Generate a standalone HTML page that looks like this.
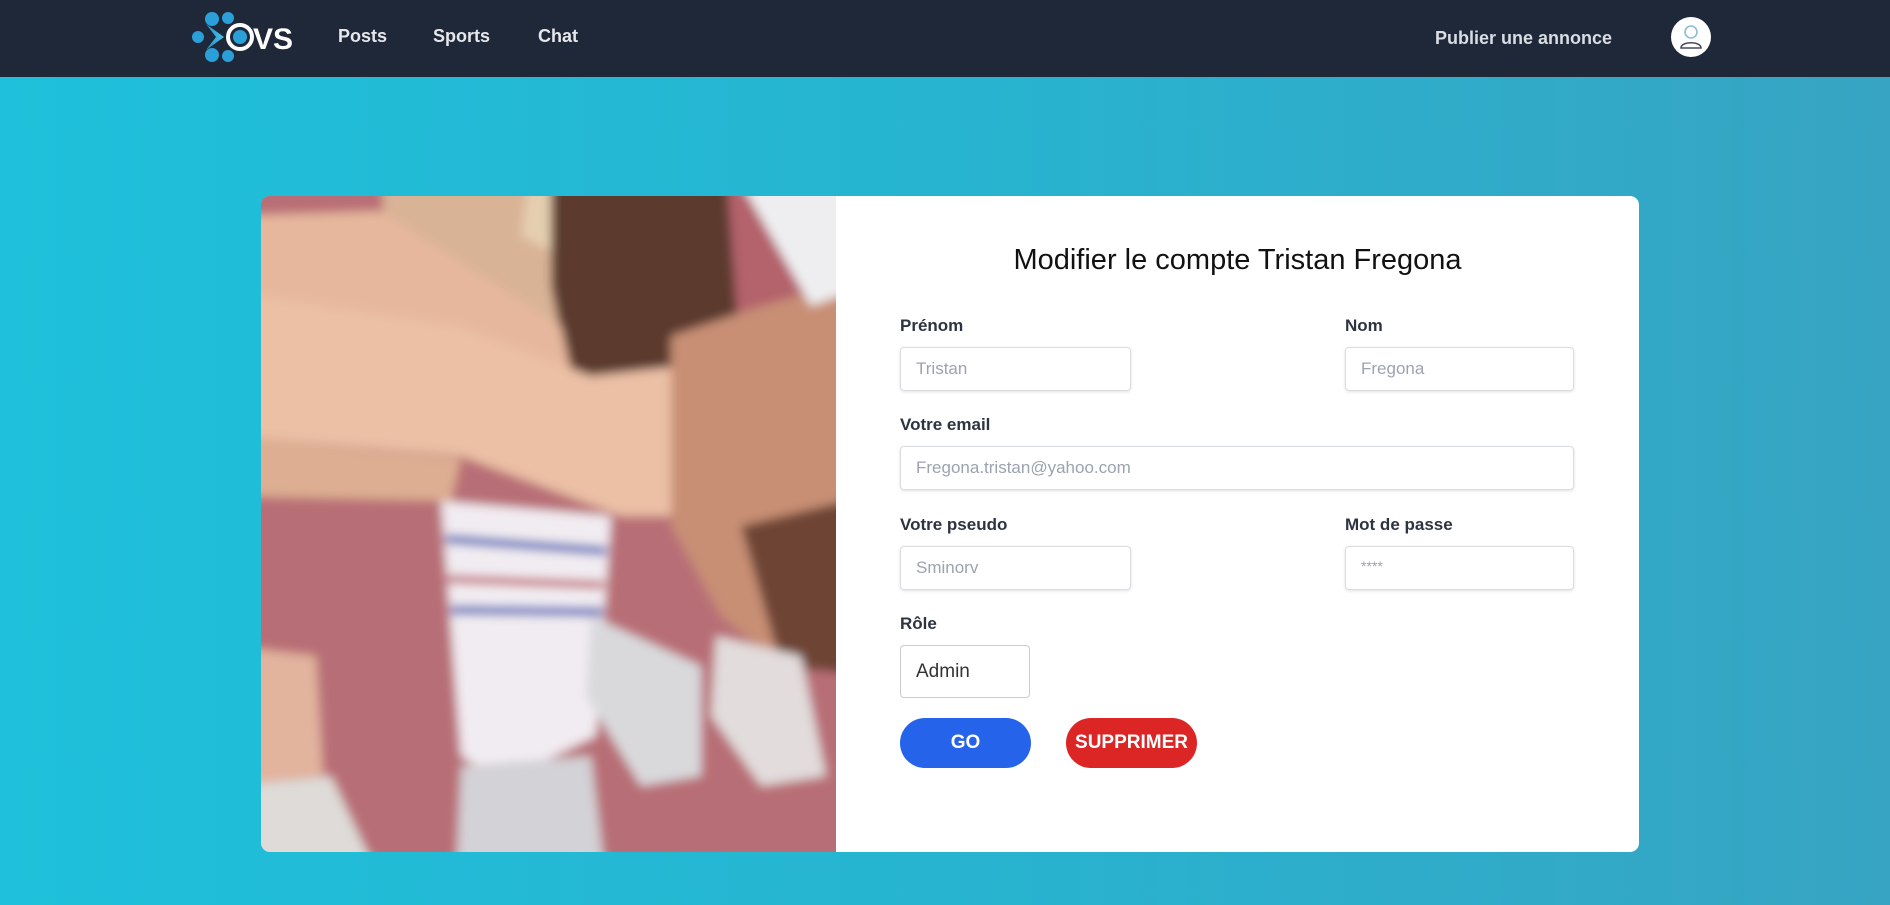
<!DOCTYPE html>
<html><head><meta charset="utf-8"><style>
*{box-sizing:border-box;margin:0;padding:0}
body{width:1890px;height:905px;overflow:hidden;font-family:"Liberation Sans",sans-serif;background:linear-gradient(90deg,#1ec0db 0%,#27b4d0 50%,#37a4c3 100%);position:relative}
.hdr{position:absolute;left:0;top:0;width:1890px;height:77px;background:#1f2839}
.nav{position:absolute;top:26px;color:#e5e7eb;font-weight:bold;font-size:18px}
.card{position:absolute;left:261px;top:196px;width:1378px;height:656px;background:#fff;border-radius:9px;overflow:hidden}
.lbl{position:absolute;font-weight:bold;font-size:17px;color:#2d3340}
.inp{position:absolute;height:44px;border:1px solid #d9dce1;border-radius:4px;box-shadow:0 1px 3px rgba(0,0,0,.12);color:#9ca3af;font-size:17px;padding-left:15px;line-height:42px}
.btn{position:absolute;top:718px;height:50px;border-radius:25px;color:#fff;font-weight:bold;font-size:19px;text-align:center;line-height:50px}
</style></head><body>
<div class="hdr">
<svg style="position:absolute;left:190px;top:10px" width="106" height="54" viewBox="0 0 106 54">
<defs><linearGradient id="g" x1="0" x2="1"><stop offset="0" stop-color="#1d8fd0"/><stop offset="1" stop-color="#4cc4e4"/></linearGradient></defs>
<circle cx="8" cy="27" r="6" fill="#2a9fd8"/>
<circle cx="22" cy="9" r="7" fill="#2a9fd8"/>
<circle cx="22" cy="45" r="7" fill="#2a9fd8"/>
<circle cx="38" cy="8" r="6" fill="#2a9fd8"/>
<circle cx="38" cy="46" r="6" fill="#2a9fd8"/>
<path d="M16 14 L34 27 L16 40 L26 27 Z" fill="url(#g)"/>
<circle cx="50" cy="27" r="12" fill="none" stroke="#fff" stroke-width="4"/>
<circle cx="50" cy="27" r="7" fill="#2a9fd8"/>
<text x="63" y="39" fill="#fff" font-family="Liberation Sans" font-weight="bold" font-size="30">VS</text>
</svg>
<div class="nav" style="left:338px">Posts</div>
<div class="nav" style="left:433px">Sports</div>
<div class="nav" style="left:538px">Chat</div>
<div class="nav" style="left:1435px;top:28px;color:#d8dde4">Publier une annonce</div>
<svg style="position:absolute;left:1671px;top:17px" width="40" height="40" viewBox="0 0 40 40">
<circle cx="20" cy="20" r="20" fill="#fff"/>
<circle cx="20" cy="15" r="6" fill="none" stroke="#8bbfd0" stroke-width="1.6"/>
<path d="M10 31 C10 24 30 24 30 31 Z" fill="none" stroke="#4a4a5a" stroke-width="1.6"/>
</svg>
</div>
<div class="card">
<div style="position:absolute;left:0;top:0;width:575px;height:656px;overflow:hidden;background:#b86e76">
<svg style="position:absolute;left:-30px;top:-30px" width="635" height="716" viewBox="-30 -30 635 716">
<defs><filter id="b" filterUnits="userSpaceOnUse" x="-30" y="-30" width="635" height="716"><feGaussianBlur stdDeviation="5"/></filter></defs>
<g filter="url(#b)">
<rect x="-30" y="-30" width="635" height="716" fill="#b86e76"/>
<rect x="440" y="-30" width="165" height="290" fill="#b4626c"/>
<path d="M120 -30 L290 -30 L300 170 L260 230 L130 180 Z" fill="#d9b396"/>
<path d="M270 -30 L300 -30 L300 60 L260 40 Z" fill="#e5cfb0"/>
<path d="M290 -30 L465 -30 L480 170 L420 200 L310 190 L290 90 Z" fill="#5b3a2e"/>
<path d="M-30 20 L120 15 L300 130 L310 175 L-30 120 Z" fill="#e6b79c"/>
<path d="M-30 95 L200 130 L330 180 L420 170 L470 220 L440 320 L360 320 L200 260 L-30 240 Z" fill="#ebc0a5"/>
<path d="M-30 240 L200 262 L190 305 L-30 300 Z" fill="#ddae92"/>
<path d="M410 140 L500 110 L605 80 L605 400 L520 470 L460 420 L410 330 Z" fill="#c88f75"/>
<path d="M470 -30 L605 -30 L605 90 L550 110 Z" fill="#eeeef0"/>
<path d="M480 330 L605 300 L605 480 L520 470 Z" fill="#6e4535"/>
<path d="M180 305 L350 320 L335 540 L240 585 L200 560 Z" fill="#f1ecf1"/>
<path d="M185 343 L345 355" stroke="#3e56b5" stroke-width="8"/>
<path d="M187 383 L343 389" stroke="#bb4b5a" stroke-width="7"/>
<path d="M190 414 L342 416" stroke="#3e56b5" stroke-width="8"/>
<path d="M330 420 L440 470 L440 580 L380 590 L325 500 Z" fill="#d9d9dc"/>
<path d="M200 570 L330 560 L345 686 L195 686 Z" fill="#d3d2d6"/>
<path d="M455 440 L540 460 L565 580 L500 590 L450 520 Z" fill="#e2dcdc"/>
<path d="M-30 450 L55 460 L62 580 L-30 590 Z" fill="#e2b49e"/>
<path d="M-30 590 L70 580 L120 686 L-30 686 Z" fill="#dedbd8"/>
</g>
</svg>
</div>
<div style="position:absolute;left:575px;width:803px;top:48px;text-align:center;font-size:29px;color:#111">Modifier le compte Tristan Fregona</div>
</div>
<div class="lbl" style="left:900px;top:316px">Prénom</div>
<div class="lbl" style="left:1345px;top:316px">Nom</div>
<div class="inp" style="left:900px;top:347px;width:231px">Tristan</div>
<div class="inp" style="left:1345px;top:347px;width:229px">Fregona</div>
<div class="lbl" style="left:900px;top:415px">Votre email</div>
<div class="inp" style="left:900px;top:446px;width:674px">Fregona.tristan@yahoo.com</div>
<div class="lbl" style="left:900px;top:515px">Votre pseudo</div>
<div class="lbl" style="left:1345px;top:515px">Mot de passe</div>
<div class="inp" style="left:900px;top:546px;width:231px">Sminorv</div>
<div class="inp" style="left:1345px;top:546px;width:229px;font-size:14px;line-height:38px">****</div>
<div class="lbl" style="left:900px;top:614px">Rôle</div>
<div class="inp" style="left:900px;top:645px;width:130px;height:53px;line-height:51px;color:#333;font-size:19px;box-shadow:none;border-color:#c8ccd2">Admin</div>
<div class="btn" style="left:900px;width:131px;background:#2563eb">GO</div>
<div class="btn" style="left:1066px;width:131px;background:#dc2626">SUPPRIMER</div>
</body></html>
